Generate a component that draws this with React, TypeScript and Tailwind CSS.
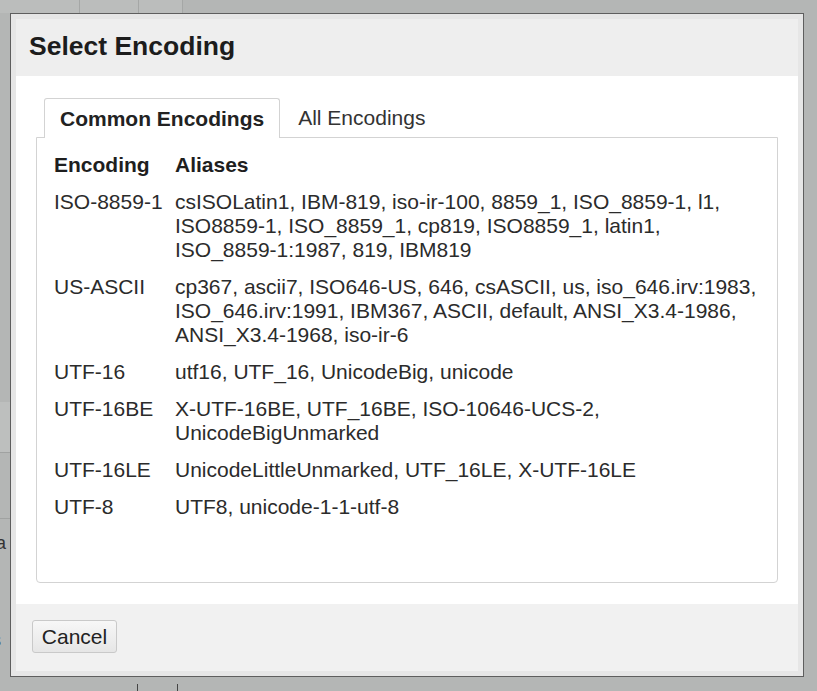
import React from "react";

const rows: { enc: string; lines: string[] }[] = [
  {
    enc: "ISO-8859-1",
    lines: [
      "csISOLatin1, IBM-819, iso-ir-100, 8859_1, ISO_8859-1, l1,",
      "ISO8859-1, ISO_8859_1, cp819, ISO8859_1, latin1,",
      "ISO_8859-1:1987, 819, IBM819",
    ],
  },
  {
    enc: "US-ASCII",
    lines: [
      "cp367, ascii7, ISO646-US, 646, csASCII, us, iso_646.irv:1983,",
      "ISO_646.irv:1991, IBM367, ASCII, default, ANSI_X3.4-1986,",
      "ANSI_X3.4-1968, iso-ir-6",
    ],
  },
  { enc: "UTF-16", lines: ["utf16, UTF_16, UnicodeBig, unicode"] },
  {
    enc: "UTF-16BE",
    lines: ["X-UTF-16BE, UTF_16BE, ISO-10646-UCS-2,", "UnicodeBigUnmarked"],
  },
  { enc: "UTF-16LE", lines: ["UnicodeLittleUnmarked, UTF_16LE, X-UTF-16LE"] },
  { enc: "UTF-8", lines: ["UTF8, unicode-1-1-utf-8"] },
];

export default function App() {
  return (
    <div
      className="relative w-[817px] h-[691px] overflow-hidden bg-[#b4b6b5] pl-[10px] pt-[13px]"
      style={{ fontFamily: '"Liberation Sans", Arial, Helvetica, sans-serif' }}
    >
      {/* faint background page details */}
      <div className="absolute left-0 top-0 w-[183px] h-[13px] bg-[#bbbdbc]">
        <div className="absolute left-[79px] top-0 h-[13px] w-px bg-[#a5a7a6]" />
        <div className="absolute left-[138px] top-0 h-[13px] w-px bg-[#a5a7a6]" />
        <div className="absolute left-[182px] top-0 h-[13px] w-px bg-[#a5a7a6]" />
      </div>
      <div className="absolute left-0 top-[402px] w-[10px] h-[50px] bg-[#bdbfbe]" />
      <div className="absolute left-0 top-[452px] w-[10px] h-px bg-[#a0a2a1]" />
      <div className="absolute left-0 top-[518px] w-[10px] h-px bg-[#a0a2a1]" />
      <div className="absolute left-0 top-[533px] w-[10px] overflow-hidden">
        <div className="text-[18px] leading-[20px] text-[#333] -ml-[4px]">a</div>
      </div>
      <div className="absolute left-0 top-[630px] w-[10px] overflow-hidden">
        <div className="text-[18px] leading-[20px] text-[#333] -ml-[8px]">s</div>
      </div>
      <div className="absolute left-[137px] top-[684px] w-px h-[7px] bg-[#444]" />
      <div className="absolute left-[177px] top-[684px] w-px h-[7px] bg-[#444]" />

      {/* dialog */}
      <div className="w-[794px] h-[664px] border border-[#5e5e5e] bg-[#e6e6e6] p-[5px]">
        <div className="flex h-full flex-col bg-white">
          {/* header */}
          <div className="h-[57px] shrink-0 bg-[#eeeeee] pl-[13px] flex items-center">
            <div className="text-[26.5px] font-bold text-[#1c1c1c] leading-none -mt-[2px]">
              Select Encoding
            </div>
          </div>
          {/* body */}
          <div className="flex-1 bg-white px-[20px] pt-[22px] pb-[21px] flex flex-col">
            <div className="flex pl-[8px]">
              <div className="h-[40px] -mb-px border border-b-0 border-[#d3d3d3] rounded-t-[3px] bg-white px-[15px] flex items-center text-[21px] font-bold text-[#222] relative z-10">
                Common Encodings
              </div>
              <div className="h-[39px] px-[18px] flex items-center text-[21px] text-[#333]">
                All Encodings
              </div>
            </div>
            <div className="flex-1 border border-[#d3d3d3] rounded-b-[4px] pt-[8px] pl-[10px] pr-[8px]">
              <div className="grid grid-cols-[128px_1fr] text-[21px] leading-[24px] text-[#2b2b2b]">
                <div className="py-[6.5px] pl-[7px] font-bold text-[#1e1e1e]">Encoding</div>
                <div className="py-[6.5px] font-bold text-[#1e1e1e]">Aliases</div>
                {rows.map((r) => (
                  <React.Fragment key={r.enc}>
                    <div className="py-[6.5px] pl-[7px] whitespace-nowrap">{r.enc}</div>
                    <div className="py-[6.5px]">
                      {r.lines.map((l) => (
                        <div key={l} className="whitespace-nowrap">
                          {l}
                        </div>
                      ))}
                    </div>
                  </React.Fragment>
                ))}
              </div>
            </div>
          </div>
          {/* footer */}
          <div className="h-[67px] shrink-0 bg-[#f1f1f1] pl-[16px] pt-[16px]">
            <button className="h-[33px] w-[85px] rounded-[3px] border border-[#c9c9c9] bg-gradient-to-b from-[#f7f7f7] to-[#e6e6e6] text-[21px] text-[#222] leading-none">
              Cancel
            </button>
          </div>
        </div>
      </div>
    </div>
  );
}
